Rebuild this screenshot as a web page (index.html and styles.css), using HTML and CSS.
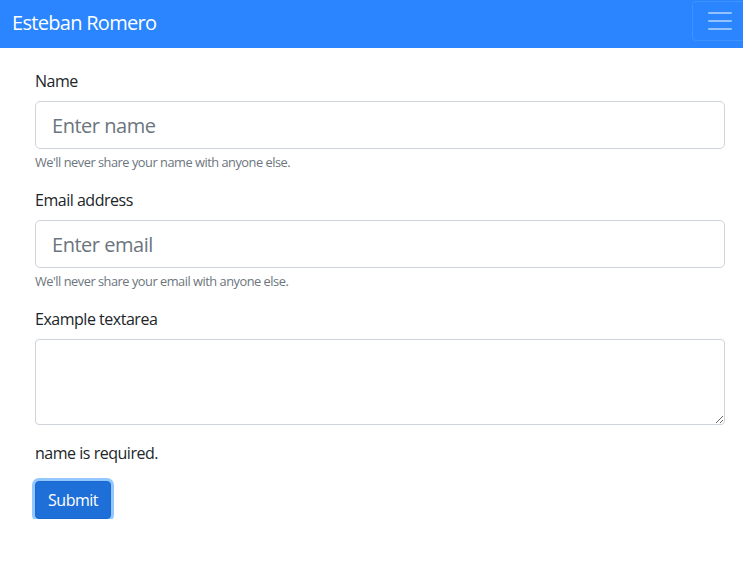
FILE: index.html
```html
<!DOCTYPE html>
<html lang="en">
<head>
<meta charset="utf-8">
<title>Esteban Romero</title>
<link rel="stylesheet" href="styles.css">
</head>
<body>
<nav class="navbar">
  <a class="brand" href="#">Esteban Romero</a>
  <button class="toggler" type="button" aria-label="Toggle navigation">
    <svg class="toggler-icon" width="30" height="30" viewBox="0 0 30 30"><path stroke="rgba(255,255,255,0.5)" stroke-linecap="round" stroke-miterlimit="10" stroke-width="2" d="M4 7h22M4 15h22M4 23h22"/></svg>
  </button>
</nav>
<main class="content">
  <form class="form">
    <div class="group">
      <label class="label" for="name">Name</label>
      <input class="control control-lg" id="name" type="text" placeholder="Enter name">
      <small class="help">We'll never share your name with anyone else.</small>
    </div>
    <div class="group">
      <label class="label" for="email">Email address</label>
      <input class="control control-lg" id="email" type="email" placeholder="Enter email">
      <small class="help">We'll never share your email with anyone else.</small>
    </div>
    <div class="group">
      <label class="label" for="msg">Example textarea</label>
      <textarea class="control area" id="msg" rows="3"></textarea>
    </div>
    <p class="error">name is required.</p>
    <button class="btn" type="submit">Submit</button>
  </form>
</main>
</body>
</html>
```
FILE: styles.css
```css
* { box-sizing: border-box; }
html, body { margin: 0; }
body {
  font-family: "Open Sans", "Noto Sans", sans-serif;
  font-size: 16px;
  line-height: 1.5;
  letter-spacing: -0.03em;
  color: #212529;
  background: #fff;
  overflow: hidden;
}
.navbar {
  height: 48px;
  background: #2a85ff;
  display: flex;
  align-items: center;
  justify-content: space-between;
  padding-left: 12px;
  overflow: hidden;
}
.brand {
  color: #fff;
  font-size: 20px;
  line-height: 30px;
  letter-spacing: -0.035em;
  text-decoration: none;
  margin-top: -2px;
}
.toggler {
  flex: none;
  width: 62px;
  height: 40px;
  margin-right: -11px;
  margin-top: -6px;
  padding: 4px 12px;
  background: transparent;
  border: 1px solid rgba(255,255,255,0.1);
  border-radius: 4px;
  display: flex;
  align-items: center;
}
.toggler-icon { display: block; }
.content {
  padding: 21px 18px 0 35px;
}
.form { width: 690px; }
.group { margin-bottom: 16px; }
.label {
  display: inline-block;
  margin-bottom: 8px;
}
.control {
  display: block;
  width: 100%;
  font-family: inherit;
  letter-spacing: inherit;
  color: #495057;
  background: #fff;
  border: 1px solid #ced4da;
  border-radius: 4px;
  padding: 6px 12px;
  font-size: 16px;
  line-height: 1.5;
}
.control::placeholder { color: #6c757d; opacity: 1; }
.control-lg {
  height: 48px;
  padding: 8px 16px;
  font-size: 20px;
  border-radius: 5px;
}
.area { height: 86px; resize: vertical; }
.help {
  display: block;
  margin-top: 4px;
  font-size: 12.8px;
  line-height: 19.2px;
  color: #6c757d;
}
.error { margin: 0 0 16px; }
.btn {
  display: inline-block;
  font-family: inherit;
  letter-spacing: inherit;
  font-size: 16px;
  line-height: 24px;
  padding: 6px 12px;
  color: #fff;
  background: #1f6fd8;
  border: 1px solid #1a69d0;
  border-radius: 4px;
  box-shadow: 0 0 0 3px rgba(38,143,255,0.5);
}
```
